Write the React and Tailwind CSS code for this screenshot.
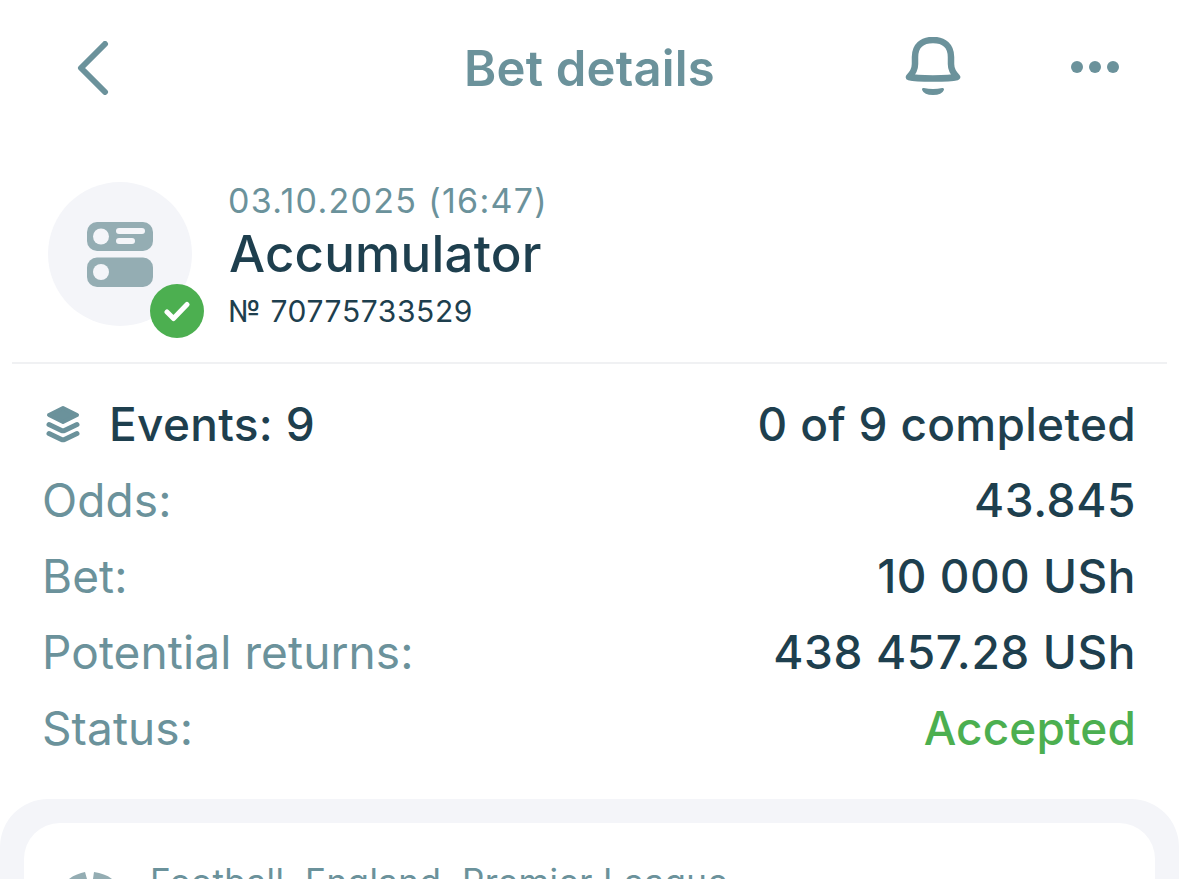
const rows = [
  { label: 'Odds:', value: '43.845', valueClass: 'text-[#1e3f4e] tracking-[0.6px]' },
  { label: 'Bet:', value: '10 000 USh', valueClass: 'text-[#1e3f4e] tracking-[0.5px]' },
  { label: 'Potential returns:', value: '438 457.28 USh', valueClass: 'text-[#1e3f4e] tracking-[0.6px]' },
  { label: 'Status:', value: 'Accepted', valueClass: 'text-[#4caf50]' },
]

function BetIcon() {
  return (
    <svg className="mt-[2px]" width="66" height="66" viewBox="0 0 66 66">
      <rect x="0" y="0" width="66" height="29" rx="10" fill="#94adb3" />
      <circle cx="14" cy="14.5" r="8" fill="#f4f5f9" />
      <rect x="29" y="6" width="29" height="6" rx="3" fill="#f4f5f9" />
      <rect x="29" y="16" width="19" height="6" rx="3" fill="#f4f5f9" />
      <rect x="0" y="35.5" width="66" height="29.5" rx="10" fill="#94adb3" />
      <circle cx="14" cy="50" r="8" fill="#f4f5f9" />
    </svg>
  )
}

function LayersIcon() {
  return (
    <svg className="block" width="34" height="38" viewBox="0 0 34 38" fill="none" stroke="#6b929b" strokeWidth="5" strokeLinecap="round" strokeLinejoin="round">
      <path d="M17 3 L31 10 L17 17 L3 10 Z" fill="#6b929b" strokeWidth="4" />
      <path d="M3 19.5 L15.5 25.5 a3.5 3.5 0 0 0 3 0 L31 19.5" />
      <path d="M3 28.5 L15.5 34.5 a3.5 3.5 0 0 0 3 0 L31 28.5" />
    </svg>
  )
}

export default function App() {
  return (
    <div className="h-[879px] overflow-hidden bg-white font-['Inter',sans-serif]">
      <header className="flex items-center h-[136px] pl-[72px] pr-[60px] text-[#6b929b]">
        <svg width="42" height="54" viewBox="0 0 42 54" fill="none" stroke="#6b929b" strokeWidth="6" strokeLinecap="round" strokeLinejoin="round">
          <path d="M33 3 L9 27 L33 51" />
        </svg>
        <h1 className="ml-[350px] text-[49px] leading-none font-semibold tracking-[0.2px]">Bet details</h1>
        <svg className="ml-auto mr-[110px] mb-[2px]" width="56" height="60" viewBox="0 0 56 60" fill="none" stroke="#6b929b" strokeWidth="6.5" strokeLinecap="round" strokeLinejoin="round">
          <path d="M4 40 C8 36 10 32 10 27 V20 C10 9 17 3 28 3 S46 9 46 20 V27 C46 32 48 36 52 40 C44 42 12 42 4 40 Z" />
          <path d="M18.5 52.5 Q28 54.5 37.5 52.5 Q36 56.5 28 56.5 Q20 56.5 18.5 52.5 Z" fill="#6b929b" strokeWidth="3" />
        </svg>
        <svg className="mb-[2px]" width="48" height="12" viewBox="0 0 48 12" fill="#6b929b">
          <circle cx="6" cy="6" r="6" />
          <circle cx="24" cy="6" r="6" />
          <circle cx="42" cy="6" r="6" />
        </svg>
      </header>

      <section className="flex items-start mx-[12px] pl-[36px] pt-[46px] h-[228px] border-b-2 border-[#f0f1f3] box-border">
        <div className="relative w-[144px] h-[144px] rounded-full bg-[#f4f5f9] flex items-center justify-center shrink-0">
          <BetIcon />
          <div className="absolute left-[102px] top-[102px] w-[54px] h-[54px] rounded-full bg-[#4caf50] flex items-center justify-center">
            <svg width="26" height="21" viewBox="0 0 26 21" fill="none" stroke="#ffffff" strokeWidth="5" strokeLinecap="round" strokeLinejoin="round">
              <path d="M3 11 L9.5 17.5 L23 3.5" />
            </svg>
          </div>
        </div>
        <div className="ml-[36px] -mt-[3px] flex flex-col">
          <div className="text-[34px] leading-[44px] text-[#6b929b] tracking-[1.3px]">03.10.2025 (16:47)</div>
          <div className="mt-[2px] ml-[1px] text-[51px] leading-[58px] font-medium text-[#1e3f4e] tracking-[0.2px]">Accumulator</div>
          <div className="mt-[3px] text-[30px] leading-[50px] text-[#1e3f4e] tracking-[0.6px]">№ 70775733529</div>
        </div>
      </section>

      <section className="pl-[42px] pr-[43px] pt-[22px] text-[46px] tracking-[0.1px]">
        <div className="flex justify-between items-center h-[76px]">
          <div className="flex items-center font-medium text-[#1e3f4e]">
            <span className="ml-[4px] mr-[29px]"><LayersIcon /></span>
            <span className="tracking-[0.3px]">Events: 9</span>
          </div>
          <div className="font-medium text-[#1e3f4e] tracking-[0.3px]">0 of 9 completed</div>
        </div>
        {rows.map((row) => (
          <div key={row.label} className="flex justify-between items-center h-[76px]">
            <div className="text-[#6b929b]">{row.label}</div>
            <div className={`font-medium ${row.valueClass}`}>{row.value}</div>
          </div>
        ))}
      </section>

      <section className="mt-[33px] rounded-t-[48px] bg-[#f4f5f9] px-[24px] pt-[24px] h-[200px]">
        <div className="rounded-t-[36px] bg-white h-[180px] flex items-start pl-[41px] pt-[41px]">
          <svg className="shrink-0 mt-[7px]" width="50" height="50" viewBox="0 0 50 50" fill="#94adb3">
            <path d="M4 8 C9 4 15 2 20 1 L22 8 Z" />
            <path d="M28 8 L29 1 C36 2 42 4 47 8 Z" />
          </svg>
          <div className="ml-[35px] text-[35px] leading-none tracking-[0.4px] text-[#6b929b]">Football. England. Premier League</div>
        </div>
      </section>
    </div>
  )
}
